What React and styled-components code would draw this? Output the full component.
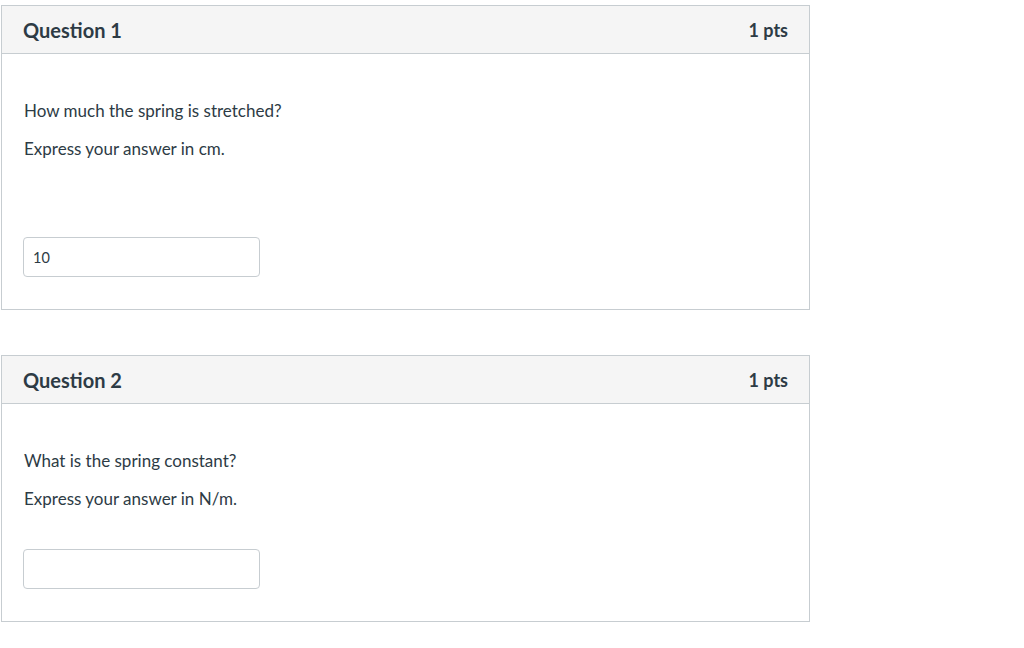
import React from 'react';
import styled, { createGlobalStyle } from 'styled-components';

const GlobalStyle = createGlobalStyle`
  body {
    margin: 0;
    background: #ffffff;
    font-family: Lato, "Open Sans", "Liberation Sans", sans-serif;
    color: #2d3b45;
  }
`;

const Page = styled.div`
  padding: 5px 0 0 1px;
  display: flex;
  flex-direction: column;
  gap: 45px;
`;

const Card = styled.div`
  width: 809px;
  box-sizing: border-box;
  border: 1px solid #c7cdd1;
  background: #ffffff;
`;

const Header = styled.div`
  height: 48px;
  box-sizing: border-box;
  display: flex;
  align-items: center;
  justify-content: space-between;
  padding: 0 21px 0 21px;
  background: #f5f5f5;
  border-bottom: 1px solid #c7cdd1;
`;

const Title = styled.h2`
  margin: 0;
  font-size: 20px;
  font-weight: 700;
  color: #2d3b45;
`;

const Points = styled.span`
  font-size: 18px;
  font-weight: 700;
  color: #2d3b45;
  padding-top: 1px;
`;

const Body = styled.div`
  padding: 45px 21px 32px;
  display: flex;
  flex-direction: column;
`;

const Text = styled.p`
  margin: 0 0 14px;
  padding-left: 1px;
  font-size: 17px;
  line-height: 24px;
`;

const Answer = styled.input`
  margin-top: ${(p) => p.$gap}px;
  width: 237px;
  height: 40px;
  box-sizing: border-box;
  border: 1px solid #c7cdd1;
  border-radius: 4px;
  padding: 0 9px;
  font-family: Lato, "Open Sans", "Liberation Sans", sans-serif;
  font-size: 14.5px;
  color: #2d3b45;
  background: #fff;
  outline: none;
`;

const questions = [
  {
    title: 'Question 1',
    lines: ['How much the spring is stretched?', 'Express your answer in cm.'],
    value: '10',
    gap: 62,
  },
  {
    title: 'Question 2',
    lines: ['What is the spring constant?', 'Express your answer in N/m.'],
    value: '',
    gap: 24,
  },
];

export default function App() {
  return (
    <>
      <GlobalStyle />
      <Page>
        {questions.map((q) => (
          <Card key={q.title}>
            <Header>
              <Title>{q.title}</Title>
              <Points>1 pts</Points>
            </Header>
            <Body>
              {q.lines.map((l) => (
                <Text key={l}>{l}</Text>
              ))}
              <Answer $gap={q.gap} defaultValue={q.value} />
            </Body>
          </Card>
        ))}
      </Page>
    </>
  );
}
